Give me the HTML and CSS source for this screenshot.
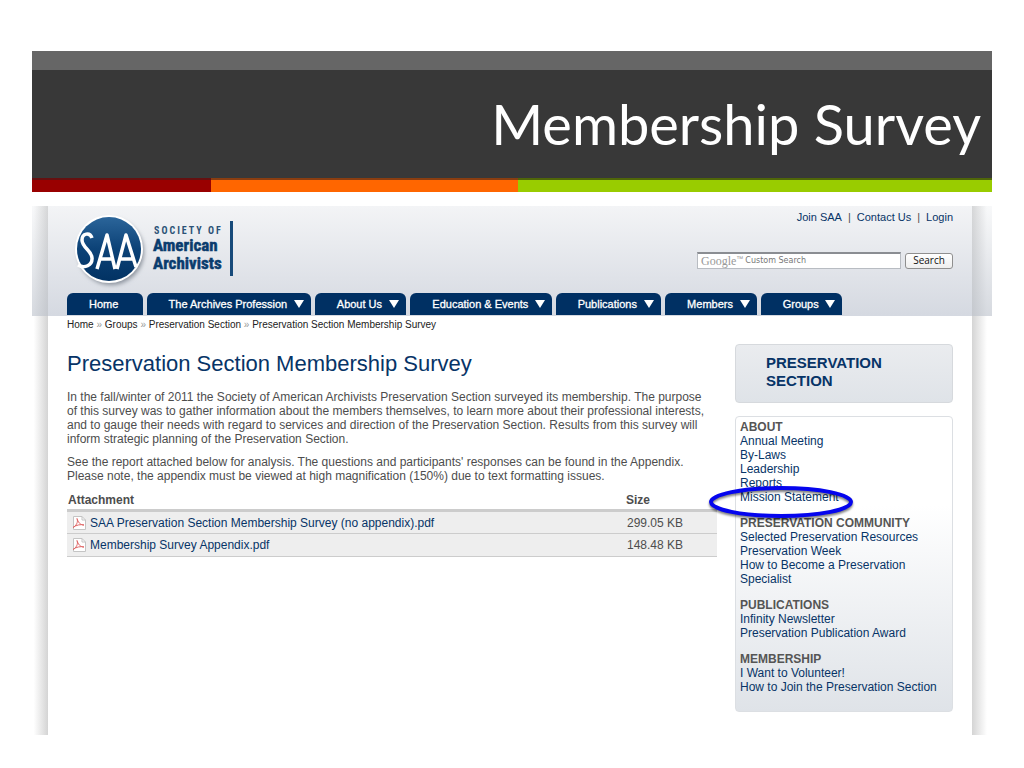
FILE: index.html
```html
<!DOCTYPE html>
<html lang="en">
<head>
<meta charset="utf-8">
<title>Membership Survey</title>
<link rel="stylesheet" href="styles.css">
</head>
<body>
<div class="slide">
  <header class="banner">
    <h1 class="banner-title">Membership Survey</h1>
    <div class="stripes"><span class="stripe red"></span><span class="stripe orange"></span><span class="stripe green"></span></div>
  </header>

  <div class="site">
    <div class="page">
      <div class="masthead">
        <div class="brand-row">
          <svg class="logo" viewBox="0 0 170 76" role="img" aria-label="Society of American Archivists">
            <defs>
              <linearGradient id="disc" x1="0" y1="0" x2="0" y2="1">
                <stop offset="0" stop-color="#2b659a"/><stop offset="0.5" stop-color="#0c4277"/><stop offset="1" stop-color="#023263"/>
              </linearGradient>
              <filter id="soft" x="-20%" y="-20%" width="150%" height="150%"><feGaussianBlur stdDeviation="2"/></filter>
            </defs>
            <circle cx="38" cy="39" r="33" fill="#8b929c" filter="url(#soft)"/>
            <circle cx="36" cy="36" r="34" fill="#fff"/>
            <circle cx="36" cy="36" r="32" fill="url(#disc)"/>
            <g fill="none" stroke="#fff" stroke-width="3.500" stroke-linejoin="round">
              <path d="M19 25C17 19 9 20 9 27C9 35 20 38 19 46C19 52 12 56 5 52"/>
              <path d="M24 56L34 22L42 56M28 46H40"/>
              <path d="M44 56L53 22L63 54M47 46H60"/>
            </g>
            <text class="logo-small" x="81" y="21">SOCIETY OF</text>
            <text class="logo-big" x="80" y="38">American</text>
            <text class="logo-big" x="80" y="56">Archivists</text>
            <rect x="157" y="8" width="3" height="55" fill="#174a7a"/>
          </svg>
          <div class="tools">
            <div class="account"><a href="#">Join SAA</a><span>|</span><a href="#">Contact Us</a><span>|</span><a href="#">Login</a></div>
            <form class="search">
              <div class="field">
                <input type="text" aria-label="Search this site">
                <div class="watermark"><span class="google">Google</span><sup>™</sup><span class="custom">Custom Search</span></div>
              </div>
              <button type="button">Search</button>
            </form>
          </div>
        </div>
        <nav class="tabs">
          <a class="home" href="#">Home</a>
          <a href="#">The Archives Profession</a>
          <a href="#">About Us</a>
          <a href="#">Education &amp; Events</a>
          <a href="#">Publications</a>
          <a href="#">Members</a>
          <a href="#">Groups</a>
        </nav>
      </div>

      <div class="crumbs"><a href="#">Home</a> <i>»</i> <a href="#">Groups</a> <i>»</i> <a href="#">Preservation Section</a> <i>»</i> <span>Preservation Section Membership Survey</span></div>

      <div class="columns">
        <main class="article">
          <h2>Preservation Section Membership Survey</h2>
          <p>In the fall/winter of 2011 the Society of American Archivists Preservation Section surveyed its membership. The purpose<br>of this survey was to gather information about the members themselves, to learn more about their professional interests,<br>and to gauge their needs with regard to services and direction of the Preservation Section. Results from this survey will<br>inform strategic planning of the Preservation Section.</p>
          <p>See the report attached below for analysis. The questions and participants' responses can be found in the Appendix.<br>Please note, the appendix must be viewed at high magnification (150%) due to text formatting issues.</p>
          <table class="files">
            <thead><tr><th>Attachment</th><th class="size">Size</th></tr></thead>
            <tbody>
              <tr><td><div class="file"><svg class="pdf" viewBox="0 0 14 14"><path d="M1.500.5H10L13.500 4V13.500H1.500Z" fill="#fff" stroke="#c4c4c4"/><path d="M10 .5V4H13.500" fill="none" stroke="#c4c4c4"/><path d="M1 11.500C4 10 6.500 6 5 2.500C6 6 8 9 12 9C9 8 4 9 1 11.500Z" fill="none" stroke="#e06666"/></svg><a href="#">SAA Preservation Section Membership Survey (no appendix).pdf</a></div></td><td>299.05 KB</td></tr>
              <tr><td><div class="file"><svg class="pdf" viewBox="0 0 14 14"><path d="M1.500.5H10L13.500 4V13.500H1.500Z" fill="#fff" stroke="#c4c4c4"/><path d="M10 .5V4H13.500" fill="none" stroke="#c4c4c4"/><path d="M1 11.500C4 10 6.500 6 5 2.500C6 6 8 9 12 9C9 8 4 9 1 11.500Z" fill="none" stroke="#e06666"/></svg><a href="#">Membership Survey Appendix.pdf</a></div></td><td>148.48 KB</td></tr>
            </tbody>
          </table>
        </main>

        <aside class="sidebar">
          <h2 class="section-name">PRESERVATION<br>SECTION</h2>
          <div class="menu">
            <section><h3>ABOUT</h3>
              <a href="#">Annual Meeting</a><a href="#">By-Laws</a><a href="#">Leadership</a><a href="#">Reports</a>
              <div class="marked"><a href="#">Mission Statement</a>
                <svg class="ring" viewBox="0 0 150 40" aria-hidden="true"><ellipse cx="75" cy="20" rx="70" ry="14" fill="none" stroke="#0505ee" stroke-width="4"/></svg>
              </div>
            </section>
            <section><h3>PRESERVATION COMMUNITY</h3>
              <a href="#">Selected Preservation Resources</a><a href="#">Preservation Week</a><a href="#">How to Become a Preservation<br>Specialist</a>
            </section>
            <section><h3>PUBLICATIONS</h3>
              <a href="#">Infinity Newsletter</a><a href="#">Preservation Publication Award</a>
            </section>
            <section><h3>MEMBERSHIP</h3>
              <a href="#">I Want to Volunteer!</a><a href="#">How to Join the Preservation Section</a>
            </section>
          </div>
        </aside>
      </div>
    </div>
  </div>
</div>
</body>
</html>
```
FILE: styles.css
```css
* { box-sizing: border-box; }
body {
  margin: 0;
  background: #fff;
  color: #4d4d4d;
  font-family: "Liberation Sans", Arial, sans-serif;
  font-size: 12px;
  line-height: 14px;
}
a { color: #073467; text-decoration: none; }
h1, h2, h3, p { margin: 0; }

.slide { padding: 51px 32px 32px; }
.banner { background: #383838; border-top: 19px solid #666; }
.banner-title {
  padding: 14px 11px;
  color: #fff;
  font: 400 56px/80px Lato, "Open Sans", sans-serif;
  text-align: right;
}
.stripes { display: flex; }
.stripe { height: 14px; border-top: 2px solid; }
.red { flex: 179; background: #990000; border-color: #651010; }
.orange { flex: 307; background: #ff6600; border-color: #8a3d10; }
.green { flex: 474; background: #99cc00; border-color: #4f6608; }

.site {
  margin-top: 14px;
  padding: 0 20px 0 16px;
  background:
    linear-gradient(rgba(220, 224, 229, 0.2), rgba(186, 192, 202, 0.6)) top / 100% 110px no-repeat,
    linear-gradient(90deg, #fff 10%, #d4d4d4) left / 16px 100% no-repeat,
    linear-gradient(270deg, #fff 25%, #d4d4d4) right / 20px 100% no-repeat;
}
.page { background: #fff; padding-bottom: 23px; }
.masthead {
  padding: 0 19px;
  background: linear-gradient(#f3f4f6, #d5d9e1);
  border-bottom: 1px solid #d5d9e1;
}
.brand-row { display: flex; justify-content: space-between; height: 87px; }
.logo { width: 170px; height: 76px; margin: 7px 0 0 6px; overflow: visible; }
.logo-small { font: 700 10px "Liberation Sans Narrow", "Roboto Condensed", sans-serif; letter-spacing: 2px; fill: #2b5276; }
.logo-big { font: 700 17px "Liberation Sans Narrow", "Roboto Condensed", sans-serif; fill: #0a3c6e; stroke: #0a3c6e; stroke-width: 0.5px; }

.tools { display: flex; flex-direction: column; align-items: flex-end; justify-content: space-between; padding: 4px 0 24px; }
.account { display: flex; gap: 6px; font-size: 11px; }
.search { display: flex; gap: 4px; align-items: center; }
.field { position: relative; display: flex; }
.field input { width: 204px; height: 17px; border: 1px solid #b8bcc2; border-top: 2px solid #8a8d92; background: #fff; padding: 0 4px; }
.watermark { position: absolute; inset: 0 auto 0 4px; display: flex; align-items: center; color: #999; pointer-events: none; }
.google { font: 12px/14px "Liberation Serif", serif; }
.watermark sup { font-size: 7px; line-height: 14px; align-self: flex-start; }
.custom { margin-left: 2px; font: 8px/14px "DejaVu Sans", sans-serif; color: #777; }
.search button { width: 48px; height: 16px; padding: 0; border: 1px solid #8f8f8f; border-radius: 3px; background: linear-gradient(#fff, #eee); color: #111; font: 10px/13px "Open Sans", sans-serif; }

.tabs { display: grid; grid-template-columns: 76fr 165fr 92fr 142fr 106fr 92fr 82fr; gap: 4px; width: 87.5%; font-size: 11px; }
.tabs a {
  display: flex;
  align-items: center;
  justify-content: space-between;
  min-width: 0;
  height: 22px;
  padding: 0 7px 0 22px;
  border-radius: 6px 6px 0 0;
  background: #003063;
  color: #fff;
  white-space: nowrap;
  -webkit-text-stroke: 0.3px #fff;
}
.tabs a::after { content: ""; border: 5px solid transparent; border-top: 8px solid #fff; border-bottom: 0; }
.tabs .home::after { content: none; }

.crumbs { padding: 2px 19px 0; font-size: 10px; color: #222; }
.crumbs a { color: #222; }
.crumbs i { color: #999; font-style: normal; }

.columns { display: flex; justify-content: space-between; padding: 12px 19px 0; }
.article { flex: 0 1 650px; padding-top: 6px; }
.article h2 { margin-bottom: 12px; font-size: 22px; line-height: 28px; font-weight: 400; color: #073467; }
.article p { margin-bottom: 9px; white-space: nowrap; }

.files { width: 100%; border-collapse: collapse; }
.files th { padding: 1px 1px 2px; text-align: left; font-weight: 700; border-bottom: 3px solid #ccc; }
.files .size { width: 92px; }
.files td { height: 23px; padding: 0 2px; background: #eee; border-bottom: 1px solid #ccc; }
.file { display: flex; align-items: center; gap: 4px; padding-left: 3px; }
.pdf { width: 14px; height: 14px; }

.sidebar { flex: 0 0 218px; }
.section-name {
  margin-bottom: 13px;
  padding: 9px 30px 12px;
  border: 1px solid #d6d9dd;
  border-radius: 4px;
  background: linear-gradient(#eaecef, #dfe3e8);
  color: #073467;
  font-size: 15px;
  line-height: 18px;
}
.menu {
  display: flex;
  flex-direction: column;
  gap: 12px;
  padding: 3px 4px 17px;
  border: 1px solid #dcdfe3;
  border-radius: 4px;
  background: linear-gradient(#fff 30%, #dfe3e8);
  white-space: nowrap;
}
.menu h3 { font-size: 12px; line-height: 14px; color: #555; }
.menu a { display: block; }
.marked { position: relative; }
.ring { position: absolute; left: -34px; top: -8px; width: 150px; height: 40px; filter: drop-shadow(0 2px 1px rgba(0, 0, 0, 0.5)); }
```
